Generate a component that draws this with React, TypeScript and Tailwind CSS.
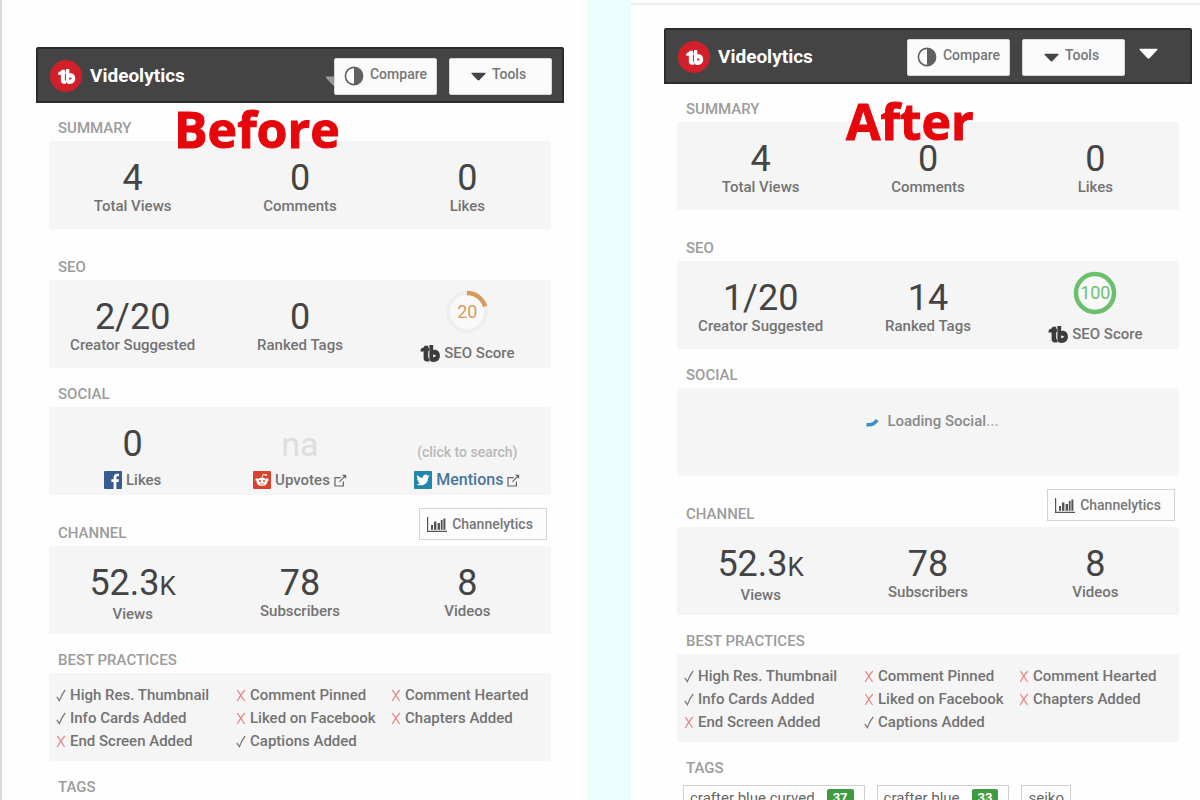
import type { ReactNode } from "react";

const panelBox = "h-[88px] rounded-xs bg-[#f5f5f5]";

function BuddyMark({ className }: { className: string }) {
  return (
    <svg viewBox="0 0 20 17" className={className} fill="none" aria-hidden="true">
      <path d="M0.4 6.4 C0.4 3.8 1.6 3 3.6 2.6 L4.6 0.8 H8.2 V2.8 H9 V6 H8.2 V12.2 C8.2 13 8.6 13.4 9.4 13.4 V16.6 H7 C4.6 16.6 3.6 15.2 3.6 13 V6.4 Z" fill="currentColor" />
      <path d="M9.4 0 H13.2 V5 C17 3.8 19.9 6.6 19.9 10.6 C19.9 15.2 17 17 13.6 17 C11 17 9.4 16 9.4 13.2 Z M13.2 9.2 V12.4 L16.4 10.8 Z" fill="currentColor" fillRule="evenodd" />
    </svg>
  );
}

function Triangle({ className }: { className: string }) {
  return (
    <svg viewBox="0 0 18 10" className={className} aria-hidden="true">
      <path d="M1 0.5 H17 Q18 0.5 17.3 1.6 L10.2 9.2 Q9 10.2 7.8 9.2 L0.7 1.6 Q0 0.5 1 0.5 Z" fill="currentColor" />
    </svg>
  );
}

function HalfCircle() {
  return (
    <svg viewBox="0 0 20 20" className="mt-1 size-5 text-[#606060]" aria-hidden="true">
      <circle cx="10" cy="10" r="8.6" fill="none" stroke="currentColor" strokeWidth="1.6" />
      <path d="M10 1.4 A8.6 8.6 0 0 1 10 18.6 Z" fill="currentColor" />
    </svg>
  );
}

function BarsIcon() {
  return (
    <svg viewBox="0 0 20 17" className="h-[17px] w-5 text-[#555]" fill="currentColor" aria-hidden="true">
      <path d="M0 1 H1.2 V14.8 H20 V16 H0 Z" />
      <rect x="4" y="9" width="2" height="4.8" />
      <rect x="7" y="5.5" width="2.4" height="8.3" />
      <rect x="10.6" y="7" width="2.4" height="6.8" />
      <rect x="13.8" y="4" width="1.8" height="9.8" />
      <rect x="16.4" y="2.5" width="2" height="11.3" />
    </svg>
  );
}

function ExternalIcon() {
  return (
    <svg viewBox="0 0 13 13" className="size-[13px] text-[#666]" fill="none" stroke="currentColor" strokeWidth="1.2" aria-hidden="true">
      <path d="M6.6 3.6 H1 V12 H9.4 V7.4" />
      <path d="M5.4 7.8 L11.4 1.6" />
      <path d="M8 0.8 H12.2 V5 Z" fill="currentColor" stroke="none" />
    </svg>
  );
}

function FacebookIcon() {
  return (
    <svg viewBox="0 0 18 18" className="size-[18px]" aria-hidden="true">
      <rect width="18" height="18" rx="1" fill="#385a8e" />
      <path d="M9.6 18 V11 H7.4 V8.3 H9.6 V6.4 C9.6 4 11 2.8 13 2.8 H15 V5.3 H13.7 C12.7 5.3 12.4 5.8 12.4 6.6 V8.3 H15 L14.6 11 H12.4 V18 Z" fill="#fff" />
    </svg>
  );
}

function RedditIcon() {
  return (
    <svg viewBox="0 0 18 18" className="size-[18px]" aria-hidden="true">
      <rect width="18" height="18" rx="1" fill="#d8432b" />
      <ellipse cx="9" cy="10.8" rx="5.4" ry="4" fill="#fff" />
      <circle cx="3.9" cy="8.8" r="1.5" fill="#fff" />
      <circle cx="14.1" cy="8.8" r="1.5" fill="#fff" />
      <path d="M9 7 L10 3.4 L12.6 4" stroke="#fff" strokeWidth="0.9" fill="none" />
      <circle cx="13" cy="4" r="1.1" fill="#fff" />
      <circle cx="7" cy="10" r="1" fill="#d8432b" />
      <circle cx="11" cy="10" r="1" fill="#d8432b" />
      <path d="M6.8 12.6 Q9 13.8 11.2 12.6" stroke="#d8432b" strokeWidth="0.7" fill="none" />
    </svg>
  );
}

function TwitterIcon() {
  return (
    <svg viewBox="0 0 18 18" className="size-[18px]" aria-hidden="true">
      <rect width="18" height="18" rx="1" fill="#2385ae" />
      <path
        transform="translate(2.4 2.4) scale(0.55)"
        d="M24 4.6c-.9.4-1.8.7-2.8.8 1-.6 1.8-1.6 2.2-2.7-1 .6-2 1-3.1 1.2a4.9 4.9 0 0 0-8.4 4.5C7.7 8.1 4.1 6.1 1.7 3.1a4.9 4.9 0 0 0 1.5 6.6c-.8 0-1.6-.2-2.2-.6v.1c0 2.4 1.7 4.4 3.9 4.8-.7.2-1.5.2-2.2.1.6 2 2.4 3.4 4.6 3.4A9.9 9.9 0 0 1 0 19.5 14 14 0 0 0 7.5 21.7c9.1 0 14-7.5 14-14v-.6c1-.7 1.8-1.6 2.5-2.5z"
        fill="#fff"
      />
    </svg>
  );
}

function ScoreRing({ value, color }: { value: number; color: string }) {
  const length = 2 * Math.PI * 19;
  return (
    <div className="grid size-[44px] place-items-center">
      <svg viewBox="0 0 44 44" className="col-start-1 row-start-1 size-[44px]" fill="none" aria-hidden="true">
        <circle cx="22" cy="22" r="19" fill="#f9f9f9" stroke="#eeeeee" strokeWidth="4" />
        <circle
          cx="22"
          cy="22"
          r="19"
          transform="rotate(-90 22 22)"
          stroke={color}
          strokeWidth="4.5"
          strokeDasharray={`${(length * value) / 100} ${length}`}
        />
      </svg>
      <span className="col-start-1 row-start-1 text-[18px] leading-5" style={{ color }}>
        {value}
      </span>
    </div>
  );
}

function Header({ collapsible }: { collapsible: boolean }) {
  const button =
    "flex h-[37px] w-[103px] items-center justify-center rounded-xs border border-[#d8d8d8] bg-[#fbfbfb] pb-1 text-[14px] font-medium text-[#777]";
  return (
    <header className="flex h-14 items-center rounded-t-xs border-2 border-[#2c2c2c] bg-[#444444] pt-0.5 pl-3">
      <span className="grid size-8 place-items-center rounded-full bg-[#d2202a] text-white">
        <BuddyMark className="h-[15px] w-[19px]" />
      </span>
      <h2 className="ml-2 text-[19px] leading-6 font-bold text-white">Videolytics</h2>
      <div className={collapsible ? "ml-auto flex items-center" : "relative ml-auto flex items-center pr-2.5"}>
        {!collapsible && <Triangle className="absolute top-[18px] -left-[9px] h-2.5 w-[18px] text-[#999]" />}
        <button type="button" className={`${button} relative gap-1.5`}>
          <HalfCircle />
          Compare
        </button>
        <button type="button" className={`${button} ml-3 gap-1.5 pr-1`}>
          <Triangle className="mt-1 h-[9px] w-[15px] text-[#444]" />
          Tools
        </button>
        {collapsible && (
          <button type="button" aria-label="Collapse" className="mr-8 mb-2 ml-3.5 text-white">
            <Triangle className="h-[11px] w-[19px]" />
          </button>
        )}
      </div>
    </header>
  );
}

function Heading({ children }: { children: ReactNode }) {
  return <h3 className="pl-[9px] text-[15px] leading-[26px] font-medium text-[#9c9c9c]">{children}</h3>;
}

function Section({ title, gap, children }: { title: string; gap: string; children?: ReactNode }) {
  return (
    <section className={gap}>
      <Heading>{title}</Heading>
      {children}
    </section>
  );
}

function Stat({ value, unit, label }: { value: string; unit?: string; label: string }) {
  return (
    <div className="flex flex-col items-center pt-[19px] text-center">
      <span className="text-[36px] leading-9 text-[#444]">
        {value}
        {unit && <span className="text-[26px]">{unit}</span>}
      </span>
      <span className="text-[15px] leading-5 font-medium text-[#737373]">{label}</span>
    </div>
  );
}

function Stats({ children }: { children: ReactNode }) {
  return <div className={`${panelBox} grid grid-cols-3`}>{children}</div>;
}

function SeoScore({ value, color }: { value: number; color: string }) {
  return (
    <div className="flex flex-col items-center pt-2.5">
      <ScoreRing value={value} color={color} />
      <span className="mt-2 flex items-center gap-1 text-[15px] leading-[22px] font-medium text-[#737373]">
        <BuddyMark className="h-[17px] w-5 text-[#3c3c3c]" />
        SEO Score
      </span>
    </div>
  );
}

function Social() {
  const cell = "flex flex-col items-center pt-[19px]";
  const label = "mt-[7px] flex items-center gap-1 text-[15px] leading-[22px] font-medium text-[#737373]";
  return (
    <Stats>
      <div className={cell}>
        <span className="text-[36px] leading-9 text-[#444]">0</span>
        <span className={label}>
          <FacebookIcon />
          Likes
        </span>
      </div>
      <div className={cell}>
        <span className="text-[34px] leading-9 text-[#dedede]">na</span>
        <a href="#upvotes" className={label}>
          <RedditIcon />
          Upvotes
          <ExternalIcon />
        </a>
      </div>
      <div className={cell}>
        <span className="pt-4 text-[14px] leading-5 font-medium text-[#b8b8b8]">(click to search)</span>
        <a href="#mentions" className={label}>
          <TwitterIcon />
          <span className="text-[16px] text-[#48759a]">Mentions</span>
          <ExternalIcon />
        </a>
      </div>
    </Stats>
  );
}

function LoadingSocial() {
  return (
    <div className={`${panelBox} flex items-start justify-center gap-2 pt-[22px] pl-2`}>
      <svg viewBox="0 0 14 12" className="mt-1.5 h-3 w-3.5" fill="none" aria-hidden="true">
        <path d="M1.5 8.5 Q8 10 12.2 4" stroke="#3d8fc0" strokeWidth="3.4" />
      </svg>
      <span className="text-[15px] leading-[22px] font-medium text-[#8a8a8a]">
        Loading Social<span className="text-[#b5b5b5]">...</span>
      </span>
    </div>
  );
}

function Channel() {
  return (
    <section>
      <div className="flex h-[51px] items-end justify-between">
        <Heading>CHANNEL</Heading>
        <button
          type="button"
          className="mr-1 mb-1.5 flex h-8 w-32 items-center justify-center gap-[5px] border border-[#d2d2d2] bg-[#fcfcfc] pr-1.5 text-[14px] font-medium text-[#777]"
        >
          <BarsIcon />
          Channelytics
        </button>
      </div>
      <Stats>
        <Stat value="52.3" unit="K" label="Views" />
        <Stat value="78" label="Subscribers" />
        <Stat value="8" label="Videos" />
      </Stats>
    </section>
  );
}

const practices: [string, boolean][] = [
  ["High Res. Thumbnail", true],
  ["Comment Pinned", false],
  ["Comment Hearted", false],
  ["Info Cards Added", true],
  ["Liked on Facebook", false],
  ["Chapters Added", false],
  ["End Screen Added", false],
  ["Captions Added", true],
];

function Practices() {
  return (
    <ul className={`${panelBox} grid auto-rows-[23px] grid-cols-[180fr_155fr_160fr] pt-[11px] pl-[7px]`}>
      {practices.map(([name, done]) => (
        <li key={name} className="flex items-center gap-1 text-[15px] leading-[23px] font-medium whitespace-nowrap text-[#737373]">
          <svg viewBox="0 0 10 13" className="h-[13px] w-2.5 shrink-0" fill="none" aria-hidden="true">
            {done ? (
              <path d="M0.8 7.8 L3.4 11.6 Q5.5 5.5 9.2 1" stroke="#777" strokeWidth="1.2" />
            ) : (
              <path d="M1.4 1.2 L8.6 12 M8.8 1 Q5 5 1.2 12" stroke="#e58484" strokeWidth="1.2" />
            )}
          </svg>
          {name}
        </li>
      ))}
    </ul>
  );
}

const tags: [string, number | null][] = [
  ["crafter blue curved", 37],
  ["crafter blue", 33],
  ["seiko", null],
];

function Tags() {
  return (
    <ul className="flex flex-wrap gap-3 pt-1 pl-1.5">
      {tags.map(([name, rank]) => (
        <li key={name} className="flex h-[26px] items-center gap-3 border border-[#cfcfcf] bg-white px-1.5 text-[15px] leading-[22px] text-[#666]">
          {name}
          {rank !== null && (
            <span className="mr-1 h-[18px] rounded-xs bg-[#3f9a41] px-1.5 text-[13px] leading-[18px] font-bold text-white">{rank}</span>
          )}
        </li>
      ))}
    </ul>
  );
}

const caption =
  "absolute font-['Open_Sans','Noto_Sans',sans-serif] text-[50px] leading-[56px] font-bold text-[#e5070c] [-webkit-text-stroke:1px_#e5070c] [text-shadow:0_0_2px_#ffffff]";

export default function App() {
  return (
    <main className="grid h-screen grid-cols-[587fr_44px_569fr] overflow-hidden bg-[#fefefe] font-[Roboto,'Liberation_Sans',sans-serif]">
      <div className="border-l-2 border-[#d9dbe2] pt-[47px] pr-[23px] pl-[34px]">
        <article className="relative">
          <Header collapsible={false} />
          <p className={`${caption} top-[54px] left-[138px]`}>Before</p>
          <div className="px-[13px]">
            <Section title="SUMMARY" gap="pt-3">
              <Stats>
                <Stat value="4" label="Total Views" />
                <Stat value="0" label="Comments" />
                <Stat value="0" label="Likes" />
              </Stats>
            </Section>
            <Section title="SEO" gap="pt-[25px]">
              <Stats>
                <Stat value="2/20" label="Creator Suggested" />
                <Stat value="0" label="Ranked Tags" />
                <SeoScore value={20} color="#d89a5c" />
              </Stats>
            </Section>
            <Section title="SOCIAL" gap="pt-[13px]">
              <Social />
            </Section>
            <Channel />
            <Section title="BEST PRACTICES" gap="pt-[13px]">
              <Practices />
            </Section>
            <Section title="TAGS" gap="pt-[13px]" />
          </div>
        </article>
      </div>
      <div className="bg-[#eafefe]" />
      <div className="pt-[3px]">
        <div className="border-t-2 border-[#ececec] pt-[23px] pr-2 pl-[33px]">
          <article className="relative">
            <Header collapsible />
            <p className={`${caption} top-[65px] left-[182px]`}>After</p>
            <div className="px-[13px]">
              <Section title="SUMMARY" gap="pt-3">
                <Stats>
                  <Stat value="4" label="Total Views" />
                  <Stat value="0" label="Comments" />
                  <Stat value="0" label="Likes" />
                </Stats>
              </Section>
              <Section title="SEO" gap="pt-[25px]">
                <Stats>
                  <Stat value="1/20" label="Creator Suggested" />
                  <Stat value="14" label="Ranked Tags" />
                  <SeoScore value={100} color="#6cbf6c" />
                </Stats>
              </Section>
              <Section title="SOCIAL" gap="pt-[13px]">
                <LoadingSocial />
              </Section>
              <Channel />
              <Section title="BEST PRACTICES" gap="pt-[13px]">
                <Practices />
              </Section>
              <Section title="TAGS" gap="pt-[13px]">
                <Tags />
              </Section>
            </div>
          </article>
        </div>
      </div>
    </main>
  );
}
